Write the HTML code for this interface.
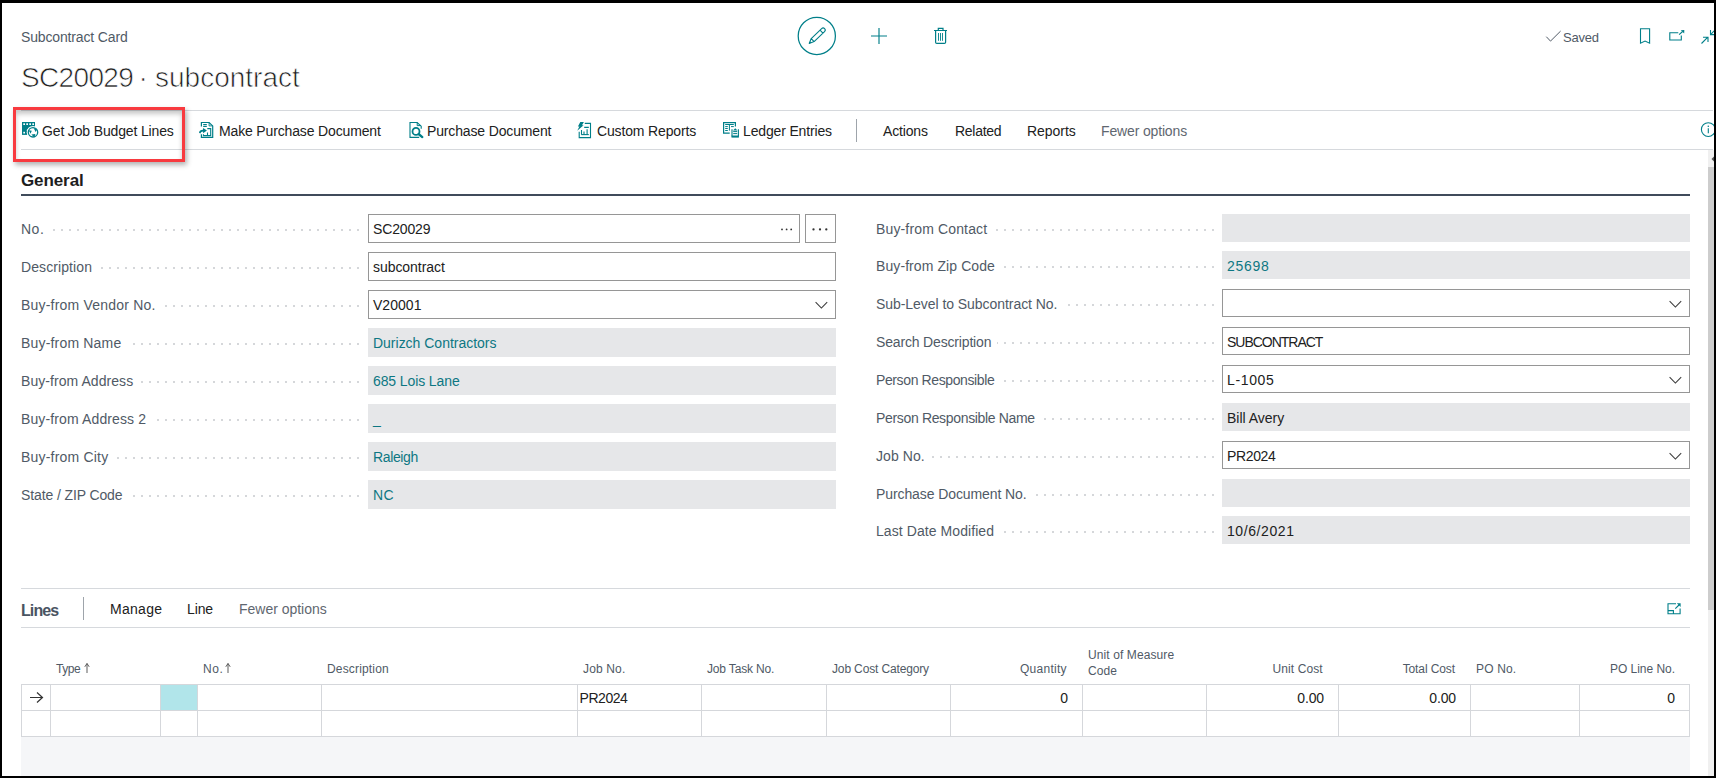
<!DOCTYPE html>
<html><head><meta charset="utf-8"><style>
*{box-sizing:border-box;margin:0;padding:0}
html,body{width:1716px;height:778px;overflow:hidden;background:#000}
body{font-family:"Liberation Sans",sans-serif;font-size:14px;color:#212121;position:relative}
#pg{position:absolute;left:2px;top:3px;width:1712px;height:773px;background:#fff;overflow:hidden}
.ab{position:absolute;white-space:nowrap;line-height:1}
.t{letter-spacing:-0.15px}
.lbl{position:absolute;white-space:nowrap;color:#505a66;line-height:16px;height:16px}
.dots{position:absolute;height:2px;background-image:linear-gradient(90deg,#d5d7da 0,#d5d7da 2px,transparent 2px);background-size:8px 2px}
.fld{position:absolute;border:1px solid #969696;background:#fff;color:#212121;padding-left:4px;white-space:nowrap}
.ro{position:absolute;background:#e6e7e9;color:#212121;padding-left:5px;white-space:nowrap}
.lnk{color:#0d7783}
.hl{position:absolute;height:1px;background:#d6d9dd}
.vl{position:absolute;width:1px;background:#d2d5d9}
.ttl{font-size:28px;color:#1f1f1f;-webkit-text-stroke:0.7px #fff}
.gh{position:absolute;white-space:nowrap;font-size:12px;color:#505a66;line-height:14px;letter-spacing:0.1px}
</style></head><body><div id="pg">

<div class="ab t" style="left:19px;top:27px;font-size:14px;color:#505a66">Subcontract Card</div>
<div class="ab ttl" style="left:19px;top:61px;letter-spacing:-0.65px">SC20029</div>
<div class="ab ttl" style="left:136.5px;top:61px">·</div>
<div class="ab ttl" style="left:153px;top:61px;letter-spacing:0px">subcontract</div>
<svg class="ab" style="left:794px;top:12px" width="42" height="42" viewBox="0 0 42 42">
<circle cx="20.8" cy="20.9" r="18.6" fill="none" stroke="#007f89" stroke-width="1.25"/>
<g transform="translate(13.2 28.4) rotate(-43.7)"><path d="M0 0 L4.8 -2.1 H19.2 A2.1 2.1 0 0 1 19.2 2.1 H4.8 Z M4.8 -2.1 V2.1 M17 -2.1 V2.1" fill="none" stroke="#007f89" stroke-width="1.1" stroke-linejoin="round"/><path d="M0 0 L2.2 -0.9 V0.9 Z" fill="#007f89"/></g>
</svg>
<svg class="ab" style="left:868px;top:24px" width="18" height="18" viewBox="0 0 18 18">
<path d="M9 1 V17 M1 9 H17" stroke="#007f89" stroke-width="1.15"/></svg>
<svg class="ab" style="left:930px;top:24px" width="18" height="18" viewBox="0 0 18 18">
<path d="M2 3.5 H15 M6.3 3.5 V1.3 H11 V3.5 M3.6 3.5 V15.2 Q3.6 16.4 4.8 16.4 H12.4 Q13.6 16.4 13.6 15.2 V3.5" fill="none" stroke="#007f89" stroke-width="1.2"/><path d="M6.5 6 V13.8 M8.5 6 V13.8 M10.5 6 V13.8" stroke="#007f89" stroke-width="0.9"/></svg>
<svg class="ab" style="left:1543px;top:27px" width="17" height="14" viewBox="0 0 17 14">
<path d="M1.3 6.7 L5.5 11.1 L15.6 1.1" fill="none" stroke="#505a66" stroke-width="1.0"/></svg>
<div class="ab t" style="left:1561px;top:28px;font-size:13px;letter-spacing:-0.2px;color:#505a66">Saved</div>
<svg class="ab" style="left:1637px;top:25px" width="13" height="17" viewBox="0 0 13 17">
<path d="M1.5 0.8 H10.6 V15.2 L6.05 13 L1.5 15.2 Z" fill="none" stroke="#007f89" stroke-width="1.1"/></svg>
<svg class="ab" style="left:1665px;top:24px" width="19" height="16" viewBox="0 0 19 16">
<path d="M11.3 5.8 H2.8 V13 H14.3 V8.4 M12.1 7.7 L15.6 4.5" fill="none" stroke="#007f89" stroke-width="1.1"/><path d="M13.8 3.2 L17.3 3.1 L17.2 6.6 Z" fill="#007f89"/></svg>
<svg class="ab" style="left:1697px;top:24px" width="18" height="19" viewBox="0 0 18 19">
<path d="M2.5 16.5 L8.3 10.6 M4 10.3 H9 V15 M11.5 3 V7.6 H16 M11.8 7.3 L17 2" fill="none" stroke="#007f89" stroke-width="1.1"/></svg>
<div class="hl" style="left:19px;top:107px;width:1692px"></div>
<div class="hl" style="left:19px;top:146px;width:1692px"></div>
<div class="vl" style="left:854px;top:116px;height:23px;background:#9ea4ab"></div>
<div class="ab t" style="left:40px;top:121px;font-size:14px;color:#212121;letter-spacing:-0.15px">Get Job Budget Lines</div>
<div class="ab t" style="left:217px;top:121px;font-size:14px;color:#212121;letter-spacing:-0.15px">Make Purchase Document</div>
<div class="ab t" style="left:425px;top:121px;font-size:14px;color:#212121;letter-spacing:-0.15px">Purchase Document</div>
<div class="ab t" style="left:595px;top:121px;font-size:14px;color:#212121;letter-spacing:-0.15px">Custom Reports</div>
<div class="ab t" style="left:741px;top:121px;font-size:14px;color:#212121;letter-spacing:-0.15px">Ledger Entries</div>
<div class="ab t" style="left:881px;top:121px;font-size:14px;color:#212121;letter-spacing:-0.15px">Actions</div>
<div class="ab t" style="left:953px;top:121px;font-size:14px;color:#212121;letter-spacing:-0.28px">Related</div>
<div class="ab t" style="left:1025px;top:121px;font-size:14px;color:#212121;letter-spacing:-0.03px">Reports</div>
<div class="ab t" style="left:1099px;top:121px;font-size:14px;color:#5f6770">Fewer options</div>
<svg class="ab" style="left:19px;top:118px" width="19" height="19" viewBox="0 0 19 19">
<rect x="1" y="1" width="13" height="12.9" fill="#007f89"/>
<rect x="2.3" y="2.3" width="1.7" height="1.7" fill="#fff"/><rect x="5.3" y="2.3" width="1.7" height="1.7" fill="#fff"/><rect x="8.3" y="2.3" width="1.7" height="1.7" fill="#fff"/><rect x="11.3" y="2.3" width="1.7" height="1.7" fill="#fff"/>
<rect x="2.3" y="10.8" width="1.7" height="1.7" fill="#fff"/>
<path d="M5 9.5 L9 6.5 L11 7.5 Z" fill="#fff"/>
<circle cx="12" cy="11.3" r="6.3" fill="#fff"/>
<circle cx="12" cy="11.3" r="4.7" fill="none" stroke="#007f89" stroke-width="1.3"/>
<path d="M12.5 6.8 L16.2 8.6 L14.6 11 Z M10.4 13.6 L14.4 13 L13.4 16.4 Z M7.6 9.2 L10.8 9.8 L9.6 12.8 Z" fill="#007f89"/>
</svg>
<svg class="ab" style="left:196px;top:118px" width="17" height="18" viewBox="0 0 17 18">
<path d="M3.4 5.6 V1.5 H11.1 L14.7 4.9 V16.4 H3.4 V13.3" fill="none" stroke="#007f89" stroke-width="1.2"/>
<path d="M11.1 1.5 V4.9 H14.7" fill="none" stroke="#007f89" stroke-width="0.9"/>
<path d="M5.2 3.5 H8.8 M5.2 5.4 H8.8 M9.3 7.6 H12.7 V14.6 H5.4 V13.3 M9.5 11.4 V14.6" fill="none" stroke="#007f89" stroke-width="1.1"/>
<path d="M1 11.8 Q1.3 8.9 5 8.7 L5.1 7 L8.9 9.6 L5.1 12.3 L5.1 10.5 Q3 10.5 2.3 12.6 Z" fill="#007f89"/>
</svg>
<svg class="ab" style="left:405.5px;top:118px" width="17" height="18" viewBox="0 0 17 18">
<path d="M11.2 16.4 H2 V1.5 H9.2 L13.2 5.2 V7.7" fill="none" stroke="#007f89" stroke-width="1.1"/>
<path d="M9.2 1.5 V4.6 H13" fill="none" stroke="#007f89" stroke-width="1"/>
<circle cx="8" cy="10.4" r="3.5" fill="#fff" stroke="#007f89" stroke-width="1.8"/>
<path d="M10.6 13 L14.3 16.1" stroke="#007f89" stroke-width="2.3" stroke-linecap="round"/>
</svg>
<svg class="ab" style="left:574px;top:118px" width="17" height="18" viewBox="0 0 17 18">
<path d="M3.2 10.8 V16.6 H14.5 V2.4 H8.8" fill="none" stroke="#007f89" stroke-width="1.1"/>
<path d="M8.2 6.4 H12.8 M5.5 13.5 V9 M8 13.5 V10.4 M11.1 13.5 V8.3" fill="none" stroke="#007f89" stroke-width="1.1"/>
<path d="M5.2 13.6 H12.8" stroke="#007f89" stroke-width="1.1"/>
<path d="M4.3 1 H7.9 L6 4.2 H7.6 L1.2 9.8 L3.4 5.6 H1.9 Z" fill="#007f89"/>
</svg>
<svg class="ab" style="left:720px;top:118px" width="18" height="18" viewBox="0 0 18 18">
<path d="M7.7 12.2 H1.6 V1.7 H13.4 V5.6" fill="none" stroke="#007f89" stroke-width="1.2"/>
<path d="M3.2 3.5 H11.8 M7.4 3.5 V9.6 M3.2 5.6 H5.8 M3.2 7.5 H5.8 M3.2 9.5 H5.8 M9 5.6 H11.8" fill="none" stroke="#007f89" stroke-width="1"/>
<path d="M10 8.3 V15.6 M16.4 8.3 V15.6" fill="none" stroke="#007f89" stroke-width="1.1"/>
<rect x="9.5" y="14.5" width="7.4" height="2.1" fill="#007f89"/>
<path d="M11 9.6 H15.5 L13.25 7.3 Z" fill="#007f89"/>
<path d="M11.2 10.6 H15.2 M11.2 12.6 H15.2" fill="none" stroke="#007f89" stroke-width="1"/>
</svg>
<svg class="ab" style="left:1698px;top:118px" width="18" height="18" viewBox="0 0 18 18">
<circle cx="8.3" cy="8.6" r="6.9" fill="none" stroke="#007f89" stroke-width="1.1"/>
<path d="M8.3 7.3 V12.2" stroke="#007f89" stroke-width="1.1"/><circle cx="8.3" cy="5.2" r="0.8" fill="#007f89"/></svg>
<div class="ab" style="left:11px;top:104px;width:172px;height:55px;border:3px solid #f83a3f;box-shadow:2px 3px 5px rgba(0,0,0,0.3), inset 0 4px 5px rgba(0,0,0,0.22)"></div>
<div class="ab" style="left:19px;top:169px;font-size:17px;font-weight:bold;color:#1e1e1e;letter-spacing:-0.1px">General</div>
<div class="ab" style="left:19px;top:191px;width:1669px;height:2px;background:#404b5b"></div>
<div class="dots" style="left:19px;top:226px;width:339px"></div>
<div class="lbl" style="left:19px;top:218px;background:#fff;padding-right:6px;letter-spacing:0.5px">No.</div>
<div class="fld" style="left:366px;top:211px;width:431.70000000000005px;height:29px;line-height:16px;padding-top:6px"><span class="" style="letter-spacing:-0.15px">SC20029</span></div>
<svg class="ab" style="left:778px;top:224px" width="14" height="5" viewBox="0 0 14 5"><circle cx="2" cy="2.4" r="0.9" fill="#333"/><circle cx="6.6" cy="2.4" r="0.9" fill="#333"/><circle cx="11.2" cy="2.4" r="0.9" fill="#333"/></svg>
<div class="fld" style="left:803px;top:211px;width:31px;height:29px"></div>
<svg class="ab" style="left:809px;top:224px" width="18" height="5" viewBox="0 0 18 5"><circle cx="2.5" cy="2.4" r="1.15" fill="#333"/><circle cx="9" cy="2.4" r="1.15" fill="#333"/><circle cx="15.3" cy="2.4" r="1.15" fill="#333"/></svg>
<div class="dots" style="left:19px;top:264px;width:339px"></div>
<div class="lbl" style="left:19px;top:256px;background:#fff;padding-right:6px;letter-spacing:0.09px">Description</div>
<div class="fld" style="left:366px;top:249px;width:468px;height:29px;line-height:16px;padding-top:6px"><span class="" style="letter-spacing:-0.05px">subcontract</span></div>
<div class="dots" style="left:19px;top:302px;width:339px"></div>
<div class="lbl" style="left:19px;top:294px;background:#fff;padding-right:6px;letter-spacing:0.2px">Buy-from Vendor No.</div>
<div class="fld" style="left:366px;top:287px;width:468px;height:29px;line-height:16px;padding-top:6px"><span class="" style="letter-spacing:0.03px">V20001</span></div>
<svg class="ab" style="left:813px;top:298px" width="14" height="9" viewBox="0 0 14 9"><path d="M0.6 1.2 L6.4 7 L12.2 1.2" fill="none" stroke="#3a3a3a" stroke-width="1.05"/></svg>
<div class="dots" style="left:19px;top:340px;width:339px"></div>
<div class="lbl" style="left:19px;top:332px;background:#fff;padding-right:6px;letter-spacing:0.183px">Buy-from Name</div>
<div class="ro" style="left:366px;top:325px;width:468px;height:29px;line-height:16px;padding-top:7px"><span class="lnk" style="letter-spacing:-0.011px">Durizch Contractors</span></div>
<div class="dots" style="left:19px;top:378px;width:339px"></div>
<div class="lbl" style="left:19px;top:370px;background:#fff;padding-right:6px;letter-spacing:0.06px">Buy-from Address</div>
<div class="ro" style="left:366px;top:363px;width:468px;height:29px;line-height:16px;padding-top:7px"><span class="lnk" style="letter-spacing:-0.108px">685 Lois Lane</span></div>
<div class="dots" style="left:19px;top:416px;width:339px"></div>
<div class="lbl" style="left:19px;top:408px;background:#fff;padding-right:6px;letter-spacing:0.124px">Buy-from Address 2</div>
<div class="ro" style="left:366px;top:401px;width:468px;height:29px;line-height:16px;padding-top:7px"><span class="lnk" style="letter-spacing:-0.15px">_</span></div>
<div class="dots" style="left:19px;top:454px;width:339px"></div>
<div class="lbl" style="left:19px;top:446px;background:#fff;padding-right:6px;letter-spacing:0.2px">Buy-from City</div>
<div class="ro" style="left:366px;top:439px;width:468px;height:29px;line-height:16px;padding-top:7px"><span class="lnk" style="letter-spacing:-0.367px">Raleigh</span></div>
<div class="dots" style="left:19px;top:492px;width:339px"></div>
<div class="lbl" style="left:19px;top:484px;background:#fff;padding-right:6px;letter-spacing:-0.113px">State / ZIP Code</div>
<div class="ro" style="left:366px;top:477px;width:468px;height:29px;line-height:16px;padding-top:7px"><span class="lnk" style="letter-spacing:0.45px">NC</span></div>
<div class="dots" style="left:874px;top:226px;width:339px"></div>
<div class="lbl" style="left:874px;top:218px;background:#fff;padding-right:6px;letter-spacing:0.147px">Buy-from Contact</div>
<div class="ro" style="left:1220px;top:211px;width:468px;height:28px;line-height:16px;padding-top:7px"><span class="" style="letter-spacing:0px"></span></div>
<div class="dots" style="left:874px;top:263px;width:339px"></div>
<div class="lbl" style="left:874px;top:255px;background:#fff;padding-right:6px;letter-spacing:0.088px">Buy-from Zip Code</div>
<div class="ro" style="left:1220px;top:248px;width:468px;height:28px;line-height:16px;padding-top:7px"><span class="lnk" style="letter-spacing:0.725px">25698</span></div>
<div class="dots" style="left:874px;top:301px;width:339px"></div>
<div class="lbl" style="left:874px;top:293px;background:#fff;padding-right:6px;letter-spacing:-0.052px">Sub-Level to Subcontract No.</div>
<div class="fld" style="left:1220px;top:286px;width:468px;height:28px;line-height:16px;padding-top:6px"><span class="" style="letter-spacing:0px"></span></div>
<svg class="ab" style="left:1667px;top:297px" width="14" height="9" viewBox="0 0 14 9"><path d="M0.6 1.2 L6.4 7 L12.2 1.2" fill="none" stroke="#3a3a3a" stroke-width="1.05"/></svg>
<div class="dots" style="left:874px;top:339px;width:339px"></div>
<div class="lbl" style="left:874px;top:331px;background:#fff;padding-right:6px;letter-spacing:-0.165px">Search Description</div>
<div class="fld" style="left:1220px;top:324px;width:468px;height:28px;line-height:16px;padding-top:6px"><span class="" style="letter-spacing:-1.02px">SUBCONTRACT</span></div>
<div class="dots" style="left:874px;top:377px;width:339px"></div>
<div class="lbl" style="left:874px;top:369px;background:#fff;padding-right:6px;letter-spacing:-0.388px">Person Responsible</div>
<div class="fld" style="left:1220px;top:362px;width:468px;height:28px;line-height:16px;padding-top:6px"><span class="" style="letter-spacing:0.65px">L-1005</span></div>
<svg class="ab" style="left:1667px;top:373px" width="14" height="9" viewBox="0 0 14 9"><path d="M0.6 1.2 L6.4 7 L12.2 1.2" fill="none" stroke="#3a3a3a" stroke-width="1.05"/></svg>
<div class="dots" style="left:874px;top:415px;width:339px"></div>
<div class="lbl" style="left:874px;top:407px;background:#fff;padding-right:6px;letter-spacing:-0.336px">Person Responsible Name</div>
<div class="ro" style="left:1220px;top:400px;width:468px;height:28px;line-height:16px;padding-top:7px"><span class="" style="letter-spacing:-0.017px">Bill Avery</span></div>
<div class="dots" style="left:874px;top:453px;width:339px"></div>
<div class="lbl" style="left:874px;top:445px;background:#fff;padding-right:6px;letter-spacing:0.067px">Job No.</div>
<div class="fld" style="left:1220px;top:438px;width:468px;height:28px;line-height:16px;padding-top:6px"><span class="" style="letter-spacing:-0.35px">PR2024</span></div>
<svg class="ab" style="left:1667px;top:449px" width="14" height="9" viewBox="0 0 14 9"><path d="M0.6 1.2 L6.4 7 L12.2 1.2" fill="none" stroke="#3a3a3a" stroke-width="1.05"/></svg>
<div class="dots" style="left:874px;top:491px;width:339px"></div>
<div class="lbl" style="left:874px;top:483px;background:#fff;padding-right:6px;letter-spacing:-0.095px">Purchase Document No.</div>
<div class="ro" style="left:1220px;top:476px;width:468px;height:28px;line-height:16px;padding-top:7px"><span class="" style="letter-spacing:0px"></span></div>
<div class="dots" style="left:874px;top:528px;width:339px"></div>
<div class="lbl" style="left:874px;top:520px;background:#fff;padding-right:6px;letter-spacing:0.076px">Last Date Modified</div>
<div class="ro" style="left:1220px;top:513px;width:468px;height:28px;line-height:16px;padding-top:7px"><span class="" style="letter-spacing:0.588px">10/6/2021</span></div>
<div class="hl" style="left:19px;top:585px;width:1669px"></div>
<div class="hl" style="left:19px;top:624px;width:1669px"></div>
<div class="ab" style="left:19px;top:600px;font-size:16px;font-weight:bold;color:#4a5462;letter-spacing:-0.9px">Lines</div>
<div class="vl" style="left:81px;top:594px;height:23px;background:#9ea4ab"></div>
<div class="ab" style="left:108px;top:599px;font-size:14px;color:#212121;letter-spacing:0.29px">Manage</div>
<div class="ab" style="left:185px;top:599px;font-size:14px;color:#212121;letter-spacing:-0.12px">Line</div>
<div class="ab" style="left:237px;top:599px;font-size:14px;color:#5f6770;letter-spacing:-0.02px">Fewer options</div>
<svg class="ab" style="left:1664px;top:597px" width="17" height="17" viewBox="0 0 17 17">
<path d="M10 3.8 H2 V13.8 H14.1 V8.4 M2 10.6 H7.4 V13.8 M9.3 8.7 L13 5" fill="none" stroke="#007f89" stroke-width="1.1"/><path d="M10.8 3.25 H14.65 V7.1 Z" fill="#007f89"/></svg>
<div class="ab" style="left:19px;top:734px;width:1669px;height:40px;background:#f5f6f8"></div>
<div class="ab" style="left:159px;top:682px;width:36px;height:25px;background:#b1e5ea"></div>
<div class="hl" style="left:19px;top:681px;width:1669px;background:#d5d7db"></div>
<div class="hl" style="left:19px;top:707px;width:1669px;background:#d5d7db"></div>
<div class="hl" style="left:19px;top:733px;width:1669px;background:#d5d7db"></div>
<div class="vl" style="left:19px;top:681px;height:53px;background:#d5d7db"></div>
<div class="vl" style="left:48px;top:681px;height:53px;background:#d5d7db"></div>
<div class="vl" style="left:158px;top:681px;height:53px;background:#d5d7db"></div>
<div class="vl" style="left:195px;top:681px;height:53px;background:#d5d7db"></div>
<div class="vl" style="left:319px;top:681px;height:53px;background:#d5d7db"></div>
<div class="vl" style="left:575px;top:681px;height:53px;background:#d5d7db"></div>
<div class="vl" style="left:699px;top:681px;height:53px;background:#d5d7db"></div>
<div class="vl" style="left:824px;top:681px;height:53px;background:#d5d7db"></div>
<div class="vl" style="left:948px;top:681px;height:53px;background:#d5d7db"></div>
<div class="vl" style="left:1080px;top:681px;height:53px;background:#d5d7db"></div>
<div class="vl" style="left:1204px;top:681px;height:53px;background:#d5d7db"></div>
<div class="vl" style="left:1336px;top:681px;height:53px;background:#d5d7db"></div>
<div class="vl" style="left:1468px;top:681px;height:53px;background:#d5d7db"></div>
<div class="vl" style="left:1577px;top:681px;height:53px;background:#d5d7db"></div>
<div class="vl" style="left:1687px;top:681px;height:53px;background:#d5d7db"></div>
<div class="gh" style="left:54px;top:659px;letter-spacing:-0.467px">Type</div>
<div class="gh" style="left:201px;top:659px;letter-spacing:0.6px">No.</div>
<div class="gh" style="left:325px;top:659px;letter-spacing:0.17px">Description</div>
<div class="gh" style="left:581px;top:659px;letter-spacing:0.15px">Job No.</div>
<div class="gh" style="left:705px;top:659px;letter-spacing:-0.164px">Job Task No.</div>
<div class="gh" style="left:830px;top:659px;letter-spacing:-0.144px">Job Cost Category</div>
<div class="gh" style="right:647.2px;top:659px;letter-spacing:0.271px">Quantity</div>
<div class="gh" style="right:391.29999999999995px;top:659px;letter-spacing:0.1px">Unit Cost</div>
<div class="gh" style="right:259px;top:659px;letter-spacing:-0.1px">Total Cost</div>
<div class="gh" style="left:1474px;top:659px;letter-spacing:0.16px">PO No.</div>
<div class="gh" style="right:39px;top:659px;letter-spacing:-0.04px">PO Line No.</div>
<svg class="ab" style="left:81.7px;top:659px" width="6" height="12" viewBox="0 0 6 12"><path d="M3 1.5 V11 M0.8 4.8 L3 1.5 L5.2 4.8" fill="none" stroke="#555" stroke-width="0.95"/></svg>
<svg class="ab" style="left:223.4px;top:659px" width="6" height="12" viewBox="0 0 6 12"><path d="M3 1.5 V11 M0.8 4.8 L3 1.5 L5.2 4.8" fill="none" stroke="#555" stroke-width="0.95"/></svg>
<div class="gh" style="left:1086px;top:644px;line-height:16px">Unit of Measure<br>Code</div>
<svg class="ab" style="left:27px;top:688px" width="15" height="13" viewBox="0 0 15 13"><path d="M1 6.5 H13.5 M8 1.5 L13.5 6.5 L8 11.5" fill="none" stroke="#333" stroke-width="1.2"/></svg>
<div class="ab" style="left:577.5px;top:687px;font-size:14px;line-height:16px;letter-spacing:-0.45px">PR2024</div>
<div class="ab t" style="right:646px;top:687px;font-size:14px;line-height:16px">0</div>
<div class="ab t" style="right:390px;top:687px;font-size:14px;line-height:16px">0.00</div>
<div class="ab t" style="right:258px;top:687px;font-size:14px;line-height:16px">0.00</div>
<div class="ab t" style="right:39px;top:687px;font-size:14px;line-height:16px">0</div>
<div class="ab" style="left:1706px;top:147px;width:6px;height:626px;background:#f0f0f0"></div>
<div class="ab" style="left:1706px;top:164px;width:6px;height:443px;background:#cdcdcd"></div>
<svg class="ab" style="left:1708px;top:152px" width="4" height="8" viewBox="0 0 4 8"><path d="M1.5 4 L4 1.5 V6.5 Z" fill="#555"/></svg>
</div></body></html>
